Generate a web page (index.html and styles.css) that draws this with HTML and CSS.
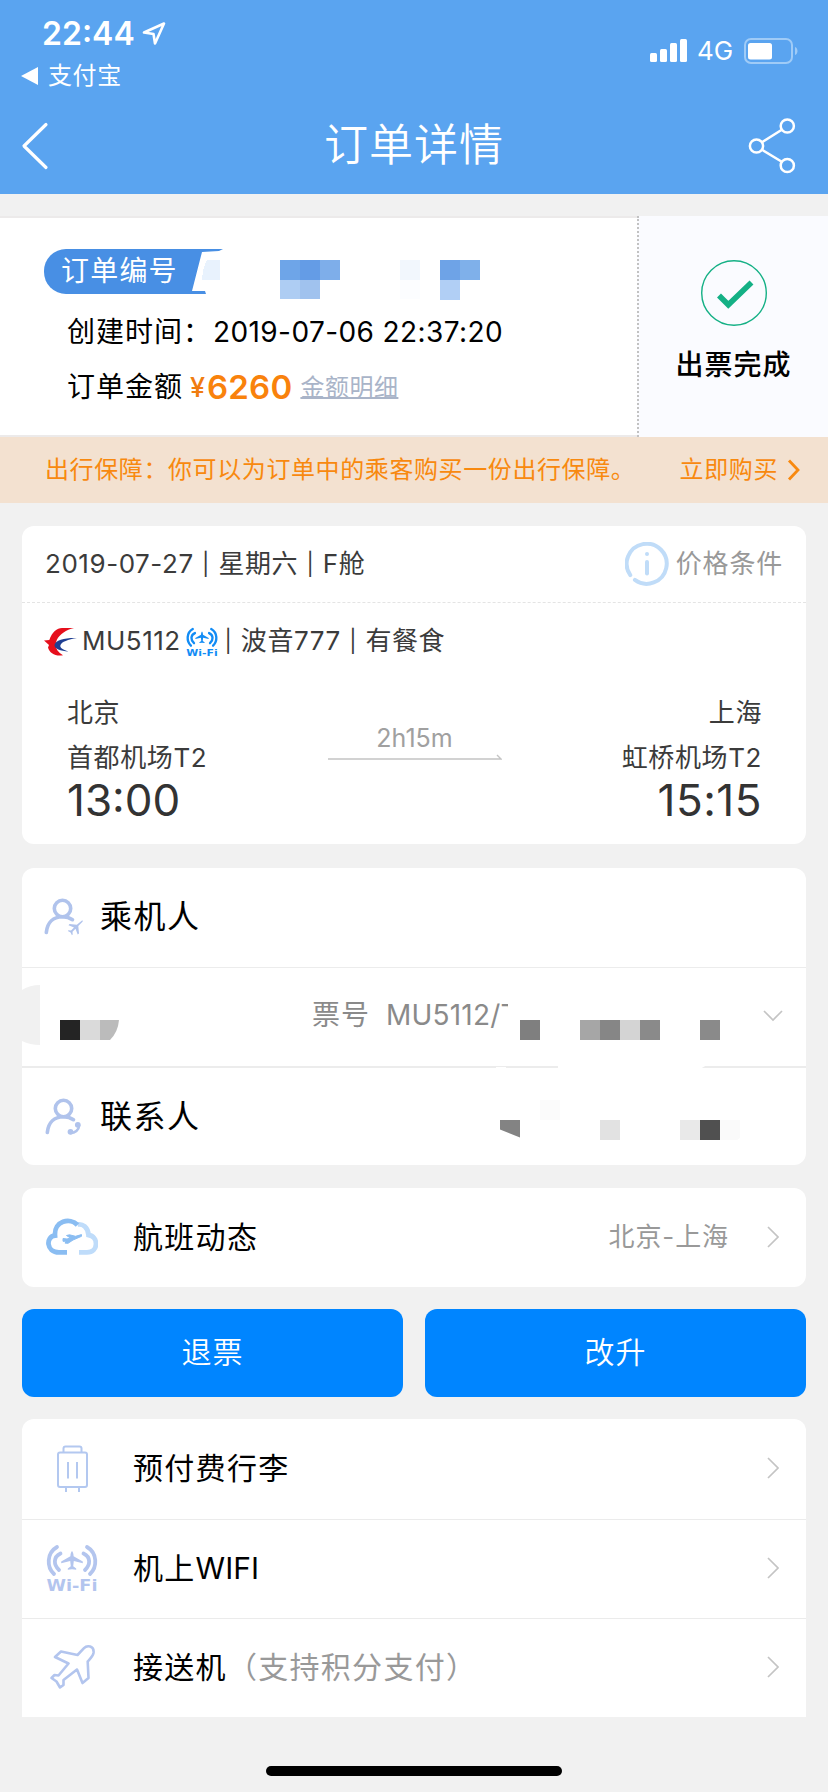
FILE: index.html
```html
<!DOCTYPE html>
<html lang="zh-CN">
<head>
<meta charset="utf-8">
<title>订单详情</title>
<link rel="stylesheet" href="styles.css">
</head>
<body>
<svg width="0" height="0" class="defs">
  <defs>
    <symbol id="chev" viewBox="0 0 12 22"><path d="M1 1l10 10L1 21" fill="none" stroke="#c4c4c4" stroke-width="1.7"/></symbol>
    <symbol id="person" viewBox="0 0 40 40">
      <g fill="none" stroke="#b0c3ec" stroke-width="3.6" stroke-linecap="round">
        <circle cx="18.5" cy="11.5" r="8.2"/>
        <path d="M2.300 35.500C3.300 25.500 9.500 19.700 18.500 19.700c4 0 7 .8 10 3"/>
      </g>
    </symbol>
    <symbol id="wifi" viewBox="0 0 52 48">
      <g fill="none" stroke="currentColor" stroke-width="3.800" stroke-linecap="round">
        <path d="M11 3C.5 9 .5 23 8 30"/><path d="M14.500 9.500C7 13 7.500 21 13 26"/>
        <path d="M41 3c10.500 6 10.500 20 3 27"/><path d="M37.500 9.500C45 13 44.500 21 39 26"/>
      </g>
      <path fill="currentColor" d="M26 7c1.100 1.200 1.500 2.800 1.600 5.200l9.200 5.200v1.800l-9-2.200-.6 5.300 3 2.300v1.200L26 25.200l-4.200.6v-1.200l3-2.300-.6-5.300-9 2.200v-1.800l9.200-5.200C24.500 9.800 24.900 8.200 26 7z"/>
      <text x="0.500" y="47" textLength="51" lengthAdjust="spacingAndGlyphs" class="wifi-label">Wi-Fi</text>
    </symbol>
  </defs>
</svg>

<header class="header">
  <div class="status">
    <div class="status-left">
      <div class="clock-row">
        <span class="clock">22:44</span>
        <svg width="24" height="24" viewBox="0 0 24 24"><path d="M2 10.500L22 1.500 13 21.500 11.500 12z" fill="none" stroke="#fff" stroke-width="2.600" stroke-linejoin="round"/></svg>
      </div>
      <div class="return-row">
        <svg width="17" height="18" viewBox="0 0 17 18"><path d="M0 9L17 0v18z" fill="#fff"/></svg>
        <span>支付宝</span>
      </div>
    </div>
    <div class="status-right">
      <svg width="37" height="23" viewBox="0 0 37 23" fill="#fff"><rect y="14" width="7" height="9" rx="1.500"/><rect x="10" y="10" width="7" height="13" rx="1.500"/><rect x="20" y="4" width="7" height="19" rx="1.500"/><rect x="30" width="7" height="23" rx="1.500"/></svg>
      <span class="net">4G</span>
      <svg width="54" height="26" viewBox="0 0 54 26"><rect x="1" y="1" width="47" height="24" rx="6" fill="none" stroke="#9fcbf7" stroke-width="2"/><rect x="4" y="5" width="24" height="16.500" rx="2.500" fill="#fff"/><path d="M51 9c3.300 1 3.300 7 0 8z" fill="#9fcbf7"/></svg>
    </div>
  </div>
  <div class="nav">
    <svg width="28" height="48" viewBox="0 0 28 48"><path d="M25 2.500L3 24l22 21.500" fill="none" stroke="#fff" stroke-width="3.200" stroke-linecap="round" stroke-linejoin="round"/></svg>
    <h1>订单详情</h1>
    <svg width="48" height="56" viewBox="0 0 48 56" fill="none" stroke="#fff" stroke-width="2.500"><circle cx="8.500" cy="28" r="6.600"/><circle cx="39.300" cy="8" r="6.600"/><circle cx="39.300" cy="47.500" r="6.600"/><path d="M14 24.300L33.800 11.700M14 31.700l19.800 12"/></svg>
  </div>
</header>

<section class="summary">
  <div class="summary-main">
    <div class="order-row">
      <div class="badge">订单编号</div>
      <svg class="order-mosaic" width="290" height="52" viewBox="200 249 290 52" shape-rendering="crispEdges">
        <path d="M207 260h13v20h-18q1-14 5-20z" fill="#e8f2fd"/>
        <path d="M280 260h20v20h-20z" fill="#6ea5e8"/><path d="M300 260h20v20h-20z" fill="#649ce6"/><path d="M320 260h20v20h-20z" fill="#7eaeea"/>
        <path d="M280 280h20v19h-20z" fill="#aecdf3"/><path d="M300 280h20v19h-20z" fill="#a0c2ee"/>
        <path d="M400 260h20v20h-20z" fill="#f2f7fd"/><path d="M400 280h20v19h-20z" fill="#fcfdff"/>
        <path d="M440 260h20v20h-20z" fill="#6ea3e7"/><path d="M460 260h20v20h-20z" fill="#7fb0ea"/>
        <path d="M440 280h20v20h-20z" fill="#b1cff5"/>
      </svg>
    </div>
    <div class="created"><span class="cjk">创建时间：</span><span class="created-time">2019-07-06 22:37:20</span></div>
    <div class="amount"><span class="cjk">订单金额</span><span class="yen">¥</span><span class="price">6260</span><a class="detail">金额明细</a></div>
  </div>
  <div class="summary-state">
    <svg width="66" height="68" viewBox="0 0 66 68"><circle cx="33" cy="34" r="32.300" fill="none" stroke="#14b085" stroke-width="1.400"/><path d="M18 36.500l9.300 9.300L50.500 23.500" fill="none" stroke="#14b085" stroke-width="5.600"/></svg>
    <strong>出票完成</strong>
  </div>
</section>

<section class="banner">
  <span>出行保障：你可以为订单中的乘客购买一份出行保障。</span>
  <span class="buy">立即购买</span>
  <svg width="14" height="22" viewBox="0 0 14 22"><path d="M2 1.500l9 9.500-9 9.500" fill="none" stroke="#f8890f" stroke-width="2.800"/></svg>
</section>

<main class="content">
  <section class="card">
    <div class="flight-head">
      <span class="date">2019-07-27 <b>|</b> 星期六 <b>|</b> F舱</span>
      <svg width="44" height="44" viewBox="0 0 44 44" stroke="#c0dcf8" stroke-width="4" fill="none" stroke-linecap="round"><path d="M5.300 33.200A20 20 0 1 1 9.900 37.900"/><path d="M22 20v11.500"/><circle cx="22" cy="12" r="2" fill="#c0dcf8" stroke="none"/></svg>
      <span class="fare">价格条件</span>
    </div>
    <div class="flight-no">
      <svg width="33" height="28" viewBox="0 0 33 28"><path d="M30 0C22 2 16 6 13 11.500c-3 6-1 11.500 6 15.800C11 28.500 5.500 25 4 19.500L5 17 0 12.500l5.300-.5C8 4 13 0 18 0z" fill="#e60f1c"/><path d="M33 10C22 9.500 11 12 10.500 17c-.3 3.500 6 6 14 6.500-6-2-9-4-8-6.500C17.500 14 24 11.500 33 10z" fill="#1f3f92"/></svg>
      <span class="fno">MU5112</span>
      <svg class="wifi-blue" width="32" height="30"><use href="#wifi"/></svg>
      <span class="plane-info"><b>|</b> 波音777 <b>|</b> 有餐食</span>
    </div>
    <div class="route">
      <div class="stop"><p>北京</p><p class="port">首都机场T2</p><time>13:00</time></div>
      <div class="duration"><span>2h15m</span><svg width="174" height="6" viewBox="0 0 174 6"><path d="M0 5h173l-4-4" fill="none" stroke="#c4c4c4" stroke-width="1.400"/></svg></div>
      <div class="stop arrive"><p>上海</p><p class="port">虹桥机场T2</p><time>15:15</time></div>
    </div>
  </section>

  <section class="card people">
    <div class="person-row">
      <svg width="40" height="40" viewBox="0 0 40 40"><use href="#person"/><path transform="translate(24.500 23.500)" fill="#b0c3ec" d="M13.500 0c1-.2 1 .6.500 1.200L9.800 5.500l.7 7.500-1.300 1L7 8.300l-3 3 .2 2.700-.8.7-1.300-2.800L-.7 10.600l.7-.8 2.500.2 3-3L0 4.800 1 3.500l7.300.7z"/></svg>
      <span>乘机人</span>
    </div>
    <div class="ticket-row">
      <span class="ticket-label">票号</span><span class="ticket-no">MU5112/T</span>
      <svg width="20" height="12" viewBox="0 0 20 12"><path d="M1 1l9 9 9-9" fill="none" stroke="#c4c4c4" stroke-width="1.700"/></svg>
    </div>
    <div class="person-row">
      <svg width="40" height="40" viewBox="0 0 40 40"><use href="#person" x="1"/><path d="M26 36c5 .2 9-3 9.200-8" fill="none" stroke="#b0c3ec" stroke-width="2.600"/><circle cx="26.500" cy="34.800" r="2.900" fill="#b0c3ec"/><circle cx="33.800" cy="27.800" r="2.900" fill="#b0c3ec"/></svg>
      <span>联系人</span>
    </div>
    <svg class="redaction" width="784" height="297" viewBox="22 868 784 297">
      <path d="M22 990q8-5 18-5v60q-10 0-18-4z" fill="#f1f1f1"/>
      <path d="M508 998h20v34h-27v-24h7z" fill="#fff"/>
      <path d="M60 1020h20v20h-20z" fill="#242424"/><path d="M80 1020h20v20h-20z" fill="#dadada"/><path d="M100 1020h19q-1 12-9 20h-10z" fill="#bbb"/>
      <path d="M520 1020h20v20h-20z" fill="#7f7f7f"/><path d="M580 1020h20v20h-20z" fill="#a6a6a6"/><path d="M600 1020h20v20h-20z" fill="#868686"/><path d="M620 1020h20v20h-20z" fill="#d4d4d4"/><path d="M640 1020h20v20h-20z" fill="#8a8a8a"/><path d="M700 1020h20v20h-20z" fill="#8a8a8a"/>
      <path d="M558 1065h149l-7 4H558zM496 1067h10v1.500h-10z" fill="#fff"/>
      <path d="M540 1100h20v20h-20z" fill="#fbfbfb"/><path d="M500 1120h20v17.500l-20-8z" fill="#838383"/><path d="M600 1120h20v20h-20z" fill="#e2e2e2"/><path d="M680 1120h20v20h-20z" fill="#e9e9e9"/><path d="M700 1120h20v20h-20z" fill="#505050"/><path d="M720 1120h20v18l-3 2h-17z" fill="#fafafa"/>
    </svg>
  </section>

  <section class="card list">
    <div class="row">
      <svg width="52" height="37" viewBox="0 0 52 37" fill="none" stroke-width="4.800"><path d="M33 34.300h8c12 0 11.500-16 1.500-17.300C42 9 36.500 5.500 31.500 6.500" stroke="#bfdcfa"/><path d="M21 34.300H13C0 34.300-.5 18.500 9 17.500 8 3 24-1 31.500 7" stroke="#8abdf2"/><path d="M17 20.500l4 .5 3.500-1-4-2.500 3-.7 6 1.500 6-1.700 0 1.700-8.500 3.700-5 3.300-3-.2 1.200-1.900-3.200.1z" fill="#8abdf2" stroke="#8abdf2" stroke-width="1"/></svg>
      <span class="label">航班动态</span><span class="value">北京-上海</span><svg width="12" height="22"><use href="#chev"/></svg>
    </div>
  </section>

  <div class="actions"><button>退票</button><button>改升</button></div>

  <section class="card list open">
    <div class="row">
      <svg width="52" height="48" viewBox="0 -1 52 48" fill="none" stroke="#b3c8f0" stroke-width="2"><rect x="12" y="7.500" width="29" height="34.500" rx="2"/><path d="M17.500 7V3.500a2 2 0 0 1 2-2h14a2 2 0 0 1 2 2V7M22 17v16.500M31 17v16.500M20 42v5M33 42v5"/></svg>
      <span class="label">预付费行李</span><svg width="12" height="22"><use href="#chev"/></svg>
    </div>
    <div class="row">
      <svg class="wifi-pale" width="52" height="48"><use href="#wifi"/></svg>
      <span class="label">机上<span class="latin">WIFI</span></span><svg width="12" height="22"><use href="#chev"/></svg>
    </div>
    <div class="row">
      <svg width="52" height="46" viewBox="0 0 52 46" fill="none" stroke="#b3c5ee" stroke-width="2.600" stroke-linejoin="round"><path d="M31.500 11L38 4.200C41 1 48.500 1.500 47.500 9 47 12 45 14 41.700 17.500L42.500 34 36.500 39 31 25.500 17.500 36 17.500 41 14 43.500 10.500 37.500 5.500 34 8.500 31 12.500 31.500 22.500 19.500 9 13 15 7.500z"/></svg>
      <span class="label">接送机<em>（支持积分支付）</em></span><svg width="12" height="22"><use href="#chev"/></svg>
    </div>
  </section>
</main>
<div class="home-bar"></div>
</body>
</html>
```
FILE: styles.css
```css
* { box-sizing: border-box; margin: 0; padding: 0; }
body {
  width: 828px;
  height: 1792px;
  overflow: hidden;
  display: flex;
  flex-direction: column;
  background: #f1f1f1;
  color: #000;
  font-family: Inter, "Noto Sans CJK SC", sans-serif;
  line-height: 1.4;
  white-space: nowrap;
}
svg { display: block; flex: none; }
.defs { position: absolute; }
.wifi-label { font: bold 15px "DejaVu Sans", sans-serif; fill: currentColor; }
.wifi-blue { color: #128cf5; }
.wifi-pale { color: #b3c5ee; }

.header { height: 194px; background: #5aa4f0; color: #fff; }
.status { display: flex; justify-content: space-between; height: 98px; padding: 14px 30px 0 21px; }
.clock-row { display: flex; align-items: center; gap: 7px; height: 40px; padding-left: 21px; }
.clock { font-size: 32px; font-weight: 600; line-height: 40px; }
.return-row { display: flex; align-items: center; gap: 10px; height: 43px; font-size: 24px; letter-spacing: .6px; }
.status-right { display: flex; align-items: center; height: 73px; }
.net { width: 36px; margin: 0 11px 0 10px; font-size: 26px; line-height: 30px; }
.nav { display: flex; align-items: center; justify-content: space-between; height: 96px; padding: 0 32px 0 21px; }
.nav h1 { font-size: 44px; font-weight: 350; letter-spacing: 1px; line-height: 56px; padding: 0 0 2px 31px; }

.summary { display: flex; height: 221px; margin-top: 22px; }
.summary-main { width: 637px; background: #fff; border: solid #eceaea; border-width: 2px 0; padding: 31px 0 0 44px; }
.order-row { display: flex; height: 45px; }
.badge {
  width: 179px;
  padding-left: 17px;
  border-radius: 22px 0 0 22px;
  background: #488fe4;
  color: #fff;
  font-size: 28px;
  line-height: 44px;
  letter-spacing: 1.200px;
  clip-path: polygon(0 0, 100% 0, 175px 2px, 158px 3px, 148px 42px, 161px 42px, 162px 100%, 0 100%);
}
.order-mosaic { margin-left: -23px; }
.created, .amount { display: flex; align-items: center; padding-left: 23px; font-size: 28px; height: 55px; }
.created { margin-top: 11px; }
.cjk { letter-spacing: 1px; }
.created-time { margin-left: 1px; letter-spacing: .4px; }
.yen { font-size: 27px; font-weight: 500; color: #f07c10; margin-left: 7px; }
.price { font-size: 33px; font-weight: 600; letter-spacing: .2px; color: #f9820c; margin-left: 2px; }
.detail { font-size: 24px; letter-spacing: .5px; color: #a9b4c8; margin-left: 8px; text-decoration: underline; text-underline-offset: 1px; text-decoration-thickness: 2px; }
.summary-state {
  flex: 1;
  display: flex;
  flex-direction: column;
  align-items: center;
  gap: 16px;
  padding-top: 43px;
  background: #fafbff;
  border-left: 2px dotted #c2c2c2;
}
.summary-state strong { font-size: 28px; font-weight: 500; line-height: 44px; letter-spacing: 1px; }

.banner { display: flex; align-items: center; height: 66px; padding: 0 27px 0 45px; background: #f3e1d0; color: #f8890f; font-size: 24px; letter-spacing: .6px; }
.buy { margin: 0 9px 0 auto; }

.content { padding: 23px 22px 0; }
.card { border-radius: 12px; background: #fff; }
.card b { display: inline-block; width: 9px; font-size: 22px; font-weight: 400; text-align: center; vertical-align: 1px; line-height: 1; }
.flight-head { display: flex; align-items: center; height: 77px; padding: 0 23px; border-bottom: 1px dashed #e4e4e4; font-size: 26px; color: #3b3b3b; }
.date { letter-spacing: .55px; }
.flight-head svg { margin: 0 7px 0 auto; }
.fare { color: #999; letter-spacing: .8px; }
.flight-no { display: flex; align-items: center; height: 77px; padding-left: 22px; font-size: 26px; color: #3b3b3b; }
.fno { width: 99px; margin-left: 5px; letter-spacing: .5px; }
.plane-info { margin-left: 6px; letter-spacing: .55px; }
.wifi-blue { margin-left: 5px; }
.route { display: flex; justify-content: space-between; height: 164px; padding: 11px 44px 0 45px; color: #3b3b3b; }
.stop { width: 200px; font-size: 26px; line-height: 44px; letter-spacing: .6px; }
.stop time { display: block; font-size: 44px; line-height: 40px; letter-spacing: 0; color: #333; }
.stop .port { line-height: 45px; }
.arrive { text-align: right; }
.arrive time { letter-spacing: .5px; }
.duration { display: flex; flex-direction: column; align-items: center; padding-top: 31px; color: #a0a0a0; font-size: 25px; line-height: 32px; }

.people { position: relative; height: 297px; margin-top: 24px; }
.person-row { display: flex; align-items: center; height: 99px; padding: 0 0 1px 22px; gap: 16px; font-size: 32px; letter-spacing: 1.500px; }
.ticket-row { display: flex; align-items: center; height: 101px; padding: 0 23px 2px 290px; border: solid #ececec; border-width: 1px 0 2px; color: #8a8a8a; font-size: 28px; }
.ticket-label { letter-spacing: 1px; width: 74px; }
.ticket-no { letter-spacing: .2px; }
.ticket-row svg { margin-left: auto; }
.redaction { position: absolute; inset: 0; }

.list { margin-top: 23px; }
.row { display: flex; align-items: center; height: 99px; padding: 0 27px 2px 24px; }
.row + .row { border-top: 1px solid #ebebeb; }
.label { margin-left: 35px; font-size: 30px; letter-spacing: 1.300px; }
.label em { font-style: normal; color: #999; }
.latin { letter-spacing: 0; }
.value { margin-left: auto; padding-top: 2px; font-size: 26px; letter-spacing: .9px; color: #999; }
.row svg:last-child { margin-left: auto; }
.value + svg:last-child { margin-left: 38px; }
.actions { display: grid; grid-template-columns: 1fr 1fr; gap: 22px; margin-top: 22px; }
.actions button { height: 88px; padding-bottom: 2px; border: 0; border-radius: 12px; background: #0085ff; color: #fff; font: 350 30px/42px Inter, "Noto Sans CJK SC", sans-serif; letter-spacing: 1px; }
.open { margin-top: 22px; border-radius: 12px 12px 0 0; }
.open .row:first-child { height: 100px; }

.home-bar { width: 296px; height: 10px; margin: auto auto 16px; border-radius: 5px; background: #000; }
```
